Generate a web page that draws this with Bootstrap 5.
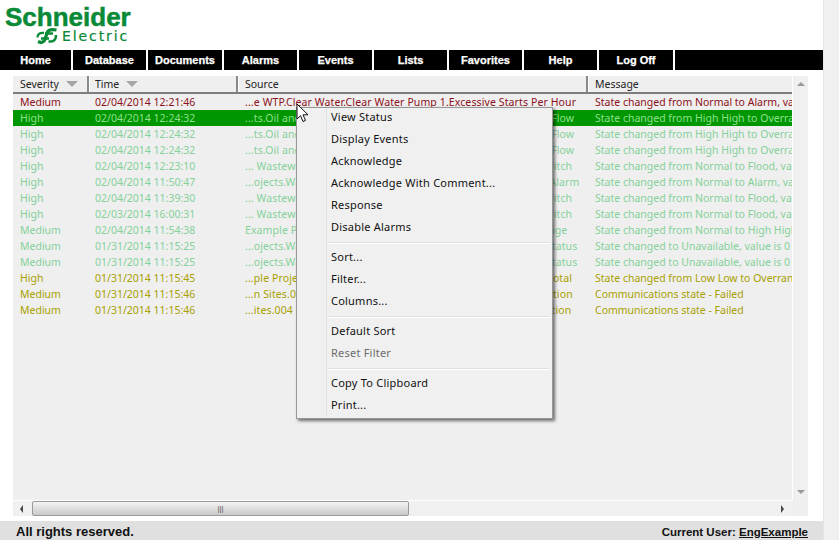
<!DOCTYPE html>
<html lang="en"><head><meta charset="utf-8">
<link href="https://cdn.jsdelivr.net/npm/bootstrap@5.3.0/dist/css/bootstrap.min.css" rel="stylesheet">
<style>
html,body{height:540px;overflow:hidden;background:#fff}
body{font-family:"Noto Sans",sans-serif;position:relative;width:839px}
.shell{width:823px;height:540px}
.pagebar{width:16px;height:540px;background:#f0f0f0;border-left:1px solid #e6e6e6}
.logo{height:50px;padding:4px 0 0 5px;color:#0a8a37;line-height:1}
.logo-top{font:700 26px/26px "Liberation Sans",sans-serif;-webkit-text-stroke:.5px #0a8a37;height:24px}
.logo-bottom{font:400 14px/14px "DejaVu Sans",sans-serif;letter-spacing:1.9px;margin-left:31px;gap:4px;-webkit-text-stroke:.2px #0a8a37}
.mainnav{height:20px;background:#000}
.mainnav a{display:block;height:20px;width:75px;border-right:2px solid #fff;color:#fff;text-align:center;font:700 11px/20px "Liberation Sans",sans-serif;text-decoration:none;-webkit-text-stroke:.25px #fff}
.mainnav a:first-child{width:73px}
.mainnav a:nth-child(3){width:76px}.mainnav a:nth-child(9){width:76px}
.panelwrap{height:440px;margin:6px 15px 0 13px;background:#efefef}
.gridcol{width:780px;height:424px;overflow:hidden}
.gridhead{height:18px;font-size:10.5px;line-height:16px;color:#222;border-bottom:2px solid #7d7d7d;background:#efefef}
.hcell{padding-left:7px;border-right:2px solid #8a8a8a;height:16px;display:flex;align-items:center;gap:7px;box-shadow:1px 0 #fff;flex:none}
.hcell.c1{width:76px}
.hcell.c2{width:149px;padding-left:6px}
.c1{width:75px}.c2{width:150px}.c3{width:350px}.c4{width:205px}
.sortmark{width:0;height:0;border-left:6px solid transparent;border-right:6px solid transparent;border-top:6px solid #a6a6a6}
.gridrow{height:16px;font-size:10.5px;line-height:16px;white-space:nowrap}
.gridrow>div{padding-left:7px;overflow:hidden;flex:none}
.gridrow>.c3{letter-spacing:.11px}
.tone-red{color:#8c1020}.tone-green{color:#85d19a}.tone-olive{color:#a8a000}
.tone-sel{background:#009600;color:#8ee08e}
.vbar{width:16px;height:424px;background:#f0f0f0;border-left:1px solid #fff;padding:6px 0}
.arrow-up{width:0;height:0;border-left:4px solid transparent;border-right:4px solid transparent;border-bottom:4px solid #9a9a9a}
.arrow-down{width:0;height:0;border-left:4px solid transparent;border-right:4px solid transparent;border-top:4px solid #9a9a9a}
.hbar{height:16px;background:#f0f0f0;width:780px;border-top:1px solid #fff}
.arrow-left{width:0;height:0;border-top:4px solid transparent;border-bottom:4px solid transparent;border-right:3px solid #444;margin:0 9px 0 7px}
.arrow-right{width:0;height:0;border-top:4px solid transparent;border-bottom:4px solid transparent;border-left:3px solid #444;margin:0 8px 0 auto}
.thumb{width:377px;height:15px;border:1px solid #9a9a9a;border-radius:2px;background:linear-gradient(#f4f4f4,#dedede 50%,#c9c9c9);font:400 8px/13px "Liberation Sans",sans-serif;color:#555;text-align:center}
.corner{width:16px;height:16px}
.foot{height:19px;margin-top:5px;background:#e0e0e0;padding:0 15px 0 16px;font:700 13px/22px "Liberation Sans",sans-serif;color:#111;overflow:hidden}
.foot small{font-size:11.5px;line-height:23px}
.foot a{color:#111}
.ctxmenu{position:absolute;left:296px;top:107px;width:257px;height:312px;background:#f0f0f0;border:1px solid #979797;box-shadow:2px 2px 3px rgba(0,0,0,.55);font-size:11px;letter-spacing:.22px;color:#111;padding:1px 0 0;list-style:none;margin:0}
.ctxmenu::before{content:"";position:absolute;left:29px;top:1px;bottom:2px;width:1px;background:#e2e2e2}
.ctxmenu li{height:22px;line-height:16px;padding-left:34px}
.ctxmenu .off{color:#6d6d6d}
.ctxmenu .sep{height:8px;margin:0 3px 0 30px;padding:0;position:relative}
.ctxmenu .sep::after{content:"";position:absolute;left:0;right:0;top:1px;height:2px;background:#e0e0e0;border-bottom:1px solid #fff}
.pointer{position:absolute;left:296px;top:103px}
</style></head><body>
<div class="d-flex">
<div class="shell">
 <div class="logo">
  <div class="logo-top">Schneider</div>
  <div class="logo-bottom d-flex align-items-center">
   <svg width="22" height="16" viewBox="0 0 22 16"><path d="M2 13.500C5 15 8 14.500 9 11.500L11 5C12 2 15 1 20.500 2" fill="none" stroke="#0a8a37" stroke-width="3.200"/><path d="M1.500 9.500C1.500 6 4 4.500 8 5M5 10.500H13M9 5.500H17" fill="none" stroke="#0a8a37" stroke-width="2.300"/><path d="M12.500 13.500C17 14 20 12.500 20 7" fill="none" stroke="#0a8a37" stroke-width="2.500"/></svg>
   <span>Electric</span>
  </div>
 </div>
 <nav class="mainnav d-flex">
  <a href="#">Home</a><a href="#">Database</a><a href="#">Documents</a><a href="#">Alarms</a><a href="#">Events</a><a href="#">Lists</a><a href="#">Favorites</a><a href="#">Help</a><a href="#">Log Off</a>
 </nav>
 <div class="panelwrap">
  <div class="d-flex">
   <div class="gridcol">
    <div class="gridhead d-flex">
     <div class="hcell c1">Severity<span class="sortmark"></span></div>
     <div class="hcell c2">Time<span class="sortmark"></span></div>
     <div class="hcell c3">Source</div>
     <div class="hcell c4 border-0">Message</div>
    </div>
    <div class="gridrow d-flex tone-red"><div class="c1">Medium</div><div class="c2">02/04/2014 12:21:46</div><div class="c3">...e WTP.Clear Water.Clear Water Pump 1.Excessive Starts Per Hour</div><div class="c4">State changed from Normal to Alarm, value is 1</div></div>
    <div class="gridrow d-flex tone-sel"><div class="c1">High</div><div class="c2">02/04/2014 12:24:32</div><div class="c3">...ts.Oil and Gas.Oil Pipeline.Compressor.Overrange. PipelinesFlow</div><div class="c4">State changed from High High to Overrange</div></div>
    <div class="gridrow d-flex tone-green"><div class="c1">High</div><div class="c2">02/04/2014 12:24:32</div><div class="c3">...ts.Oil and Gas.Oil Pipeline.Compressor.Overrange. PipelinesFlow</div><div class="c4">State changed from High High to Overrange</div></div>
    <div class="gridrow d-flex tone-green"><div class="c1">High</div><div class="c2">02/04/2014 12:24:32</div><div class="c3">...ts.Oil and Gas.Oil Pipeline.Compressor.Overrange. PipelinesFlow</div><div class="c4">State changed from High High to Overrange</div></div>
    <div class="gridrow d-flex tone-green"><div class="c1">High</div><div class="c2">02/04/2014 12:23:10</div><div class="c3">... Wastewater.LiftStation 1.Alarms.Flood Level Sensor.LevelSwitch</div><div class="c4">State changed from Normal to Flood, value is 1</div></div>
    <div class="gridrow d-flex tone-green"><div class="c1">High</div><div class="c2">02/04/2014 11:50:47</div><div class="c3">...ojects.Wastewater.Treatment Plant.Alarms.Chlorine Level 1.Alarm</div><div class="c4">State changed from Normal to Alarm, value is 1</div></div>
    <div class="gridrow d-flex tone-green"><div class="c1">High</div><div class="c2">02/04/2014 11:39:30</div><div class="c3">... Wastewater.LiftStation 2.Alarms.Flood Level Sensor.LevelSwitch</div><div class="c4">State changed from Normal to Flood, value is 1</div></div>
    <div class="gridrow d-flex tone-green"><div class="c1">High</div><div class="c2">02/03/2014 16:00:31</div><div class="c3">... Wastewater.LiftStation 3.Alarms.Flood Level Sensor.LevelSwitch</div><div class="c4">State changed from Normal to Flood, value is 1</div></div>
    <div class="gridrow d-flex tone-green"><div class="c1">Medium</div><div class="c2">02/04/2014 11:54:38</div><div class="c3">Example Projects.Clear Water.Lift Station.Alarms.Levels Message</div><div class="c4">State changed from Normal to High High</div></div>
    <div class="gridrow d-flex tone-green"><div class="c1">Medium</div><div class="c2">01/31/2014 11:15:25</div><div class="c3">...ojects.Wastewater.Outstations.Sites.001.Comms. Comms1.Status</div><div class="c4">State changed to Unavailable, value is 0</div></div>
    <div class="gridrow d-flex tone-green"><div class="c1">Medium</div><div class="c2">01/31/2014 11:15:25</div><div class="c3">...ojects.Wastewater.Outstations.Sites.002.Comms. Comms1.Status</div><div class="c4">State changed to Unavailable, value is 0</div></div>
    <div class="gridrow d-flex tone-olive"><div class="c1">High</div><div class="c2">01/31/2014 11:15:45</div><div class="c3">...ple Projects.Oil and Gas.Oil Pipeline.FlowMeter.FlowInstantTotal</div><div class="c4">State changed from Low Low to Overrange</div></div>
    <div class="gridrow d-flex tone-olive"><div class="c1">Medium</div><div class="c2">01/31/2014 11:15:46</div><div class="c3">...n Sites.003.Outstation Comms.Communication State.01. Station</div><div class="c4">Communications state - Failed</div></div>
    <div class="gridrow d-flex tone-olive"><div class="c1">Medium</div><div class="c2">01/31/2014 11:15:46</div><div class="c3">...ites.004 Outstation Comms.Communication State.Radio.Station</div><div class="c4">Communications state - Failed</div></div>
   </div>
   <div class="vbar d-flex flex-column align-items-center justify-content-between"><span class="arrow-up"></span><span class="arrow-down"></span></div>
  </div>
  <div class="d-flex align-items-center">
   <div class="hbar d-flex align-items-center"><span class="arrow-left"></span><div class="thumb">|||</div><span class="arrow-right"></span></div>
   <div class="corner"></div>
  </div>
 </div>
 <div class="foot d-flex justify-content-between"><span>All rights reserved.</span><small>Current User: <a href="#">EngExample</a></small></div>
</div>
<div class="pagebar"></div>
</div>
<ul class="ctxmenu">
 <li>View Status</li><li>Display Events</li><li>Acknowledge</li><li>Acknowledge With Comment...</li><li>Response</li><li>Disable Alarms</li>
 <li class="sep"></li>
 <li>Sort...</li><li>Filter...</li><li>Columns...</li>
 <li class="sep"></li>
 <li>Default Sort</li><li class="off">Reset Filter</li>
 <li class="sep"></li>
 <li>Copy To Clipboard</li><li>Print...</li>
</ul>
<svg class="pointer" width="14" height="20" viewBox="0 0 14 20"><path d="M1 1V16L4.5 12.7L7 18.5L9.5 17.4L7 11.8H12Z" fill="#fff" stroke="#111" stroke-width="1"/></svg>
</body></html>
